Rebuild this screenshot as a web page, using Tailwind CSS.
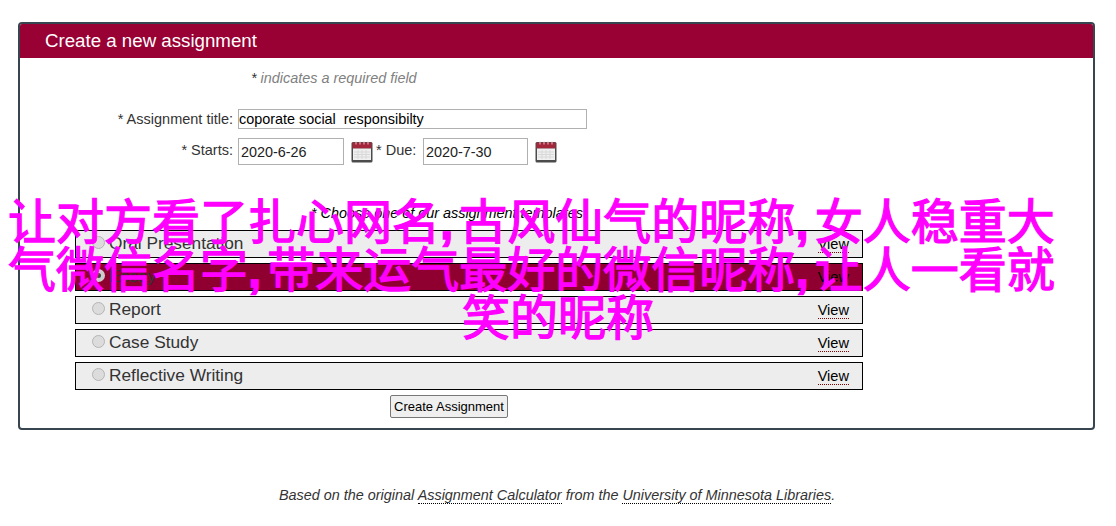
<!DOCTYPE html>
<html lang="en">
<head>
    <meta charset="UTF-8">
    <meta name="viewport" content="width=device-width, initial-scale=1.0">
    <title>Create a new assignment</title>
    <script src="https://cdn.jsdelivr.net/npm/@tailwindcss/browser@4"></script>
</head>
<body class="relative h-[526px] w-[1116px] overflow-hidden bg-white font-['Liberation_Sans',Arial,sans-serif] text-[#333]">
    <!-- Main panel -->
    <div class="mx-[18px] mt-[22px] h-[408px] w-[1077px] rounded-[4px] border-2 border-[#36454f]">
        <div class="flex h-[34px] items-center rounded-t-[2px] bg-[#990033] pl-[25px] text-[18.7px] text-white">Create a new assignment</div>

        <p class="mt-[12px] pl-[231px] text-[14.4px] leading-[16px] text-[#808080] italic"><span class="text-[#333]">*</span> indicates a required field</p>

        <!-- Title -->
        <div class="mt-[23px] flex h-[20px] items-center">
            <label class="mt-[1px] w-[213px] text-right text-[14.5px] text-[#333]">* Assignment title:</label>
            <input type="text" value="coporate social  responsibilty" class="ml-[5px] h-[20px] w-[349px] border border-[#b0b0b0] pt-[1px] font-['Liberation_Sans',sans-serif] text-[14.4px] text-black">
        </div>

        <!-- Dates -->
        <div class="mt-[9px] flex h-[27px] items-center">
            <label class="mb-[2px] w-[213px] text-right text-[14.5px] text-[#333]">* Starts:</label>
            <input type="text" value="2020-6-26" class="ml-[5px] h-[27px] w-[106px] border border-[#b0b0b0] pl-[2px] font-['Liberation_Sans',sans-serif] text-[14.4px] text-[#222]">
            <svg class="mt-[1px] ml-[7px] h-[22px] w-[22px]" viewBox="0 0 22 22">
                <rect x="0.5" y="1" width="21" height="20.5" rx="1.5" fill="#4c4c4c"/>
                <rect x="1.5" y="1.5" width="19" height="6" fill="#a3263a"/>
                <rect x="2" y="7.5" width="18" height="11.5" fill="#f0f0f0"/>
                <path d="M3 11h16M3 13.5h16M3 16h16M7 9v9M11 9v9M15 9v9" stroke="#d8d8d8" stroke-width="1"/>
                <path d="M5 0.5v3M9 0.5v3M13 0.5v3M17 0.5v3" stroke="#e4c8cc" stroke-width="1"/>
            </svg>
            <label class="mb-[2px] ml-[3px] w-[47px] text-[14.5px] text-[#333]">* Due:</label>
            <input type="text" value="2020-7-30" class="h-[27px] w-[105px] border border-[#b0b0b0] pl-[2px] font-['Liberation_Sans',sans-serif] text-[14.4px] text-[#222]">
            <svg class="mt-[1px] ml-[7px] h-[22px] w-[22px]" viewBox="0 0 22 22">
                <rect x="0.5" y="1" width="21" height="20.5" rx="1.5" fill="#4c4c4c"/>
                <rect x="1.5" y="1.5" width="19" height="6" fill="#a3263a"/>
                <rect x="2" y="7.5" width="18" height="11.5" fill="#f0f0f0"/>
                <path d="M3 11h16M3 13.5h16M3 16h16M7 9v9M11 9v9M15 9v9" stroke="#d8d8d8" stroke-width="1"/>
                <path d="M5 0.5v3M9 0.5v3M13 0.5v3M17 0.5v3" stroke="#e4c8cc" stroke-width="1"/>
            </svg>
        </div>

        <p class="mt-[40px] pl-[291px] text-[14.4px] leading-[16px] text-black italic">* Choose one of our assignment templates</p>

        <!-- Template rows -->
        <div class="mt-[9px] ml-[55px] flex w-[788px] flex-col gap-[5px]">
            <div class="flex h-[28px] items-center border border-black bg-[#ededed] pr-[13px] pl-[16px] text-[17.3px]">
                <span class="mb-[3px] h-[13px] w-[13px] rounded-full border border-[#b5b5b5] bg-[#dcdcdc]"></span>
                <span class="ml-[4px] flex-1">Oral Presentation</span>
                <a class="border-b border-dotted border-[#800000] text-[14.6px] leading-[16px] text-black">View</a>
            </div>
            <div class="flex h-[28px] items-center border border-black bg-[#8f0030] pr-[13px] pl-[16px] text-[17.3px]">
                <span class="mb-[3px] h-[13px] w-[13px] rounded-full border-[4px] border-[#ccc] bg-[#444]"></span>
                <span class="ml-[4px] flex-1">Essay</span>
                <a class="text-[14.6px] leading-[16px] text-black">View</a>
            </div>
            <div class="flex h-[28px] items-center border border-black bg-[#ededed] pr-[13px] pl-[16px] text-[17.3px]">
                <span class="mb-[3px] h-[13px] w-[13px] rounded-full border border-[#b5b5b5] bg-[#dcdcdc]"></span>
                <span class="ml-[4px] flex-1">Report</span>
                <a class="border-b border-dotted border-[#800000] text-[14.6px] leading-[16px] text-black">View</a>
            </div>
            <div class="flex h-[28px] items-center border border-black bg-[#ededed] pr-[13px] pl-[16px] text-[17.3px]">
                <span class="mb-[3px] h-[13px] w-[13px] rounded-full border border-[#b5b5b5] bg-[#dcdcdc]"></span>
                <span class="ml-[4px] flex-1">Case Study</span>
                <a class="border-b border-dotted border-[#800000] text-[14.6px] leading-[16px] text-black">View</a>
            </div>
            <div class="flex h-[28px] items-center border border-black bg-[#ededed] pr-[13px] pl-[16px] text-[17.3px]">
                <span class="mb-[3px] h-[13px] w-[13px] rounded-full border border-[#b5b5b5] bg-[#dcdcdc]"></span>
                <span class="ml-[4px] flex-1">Reflective Writing</span>
                <a class="border-b border-dotted border-[#800000] text-[14.6px] leading-[16px] text-black">View</a>
            </div>
        </div>

        <div class="mt-[4px] ml-[370px]">
            <button class="h-[23px] w-[118px] rounded-[2px] border border-[#777] bg-[#efefef] font-['Liberation_Sans',sans-serif] text-[13px] text-black">Create Assignment</button>
        </div>
    </div>

    <p class="mt-[56px] pl-[279px] text-[14.4px] leading-[19px] text-[#333] italic">Based on the original <a class="border-b border-dotted border-black">Assignment Calculator</a> from the <a class="border-b border-dotted border-black">University of Minnesota Libraries</a>.</p>

    <!-- Magenta caption over the page -->
    <div class="absolute top-[199px] left-0 w-[1116px] font-['Liberation_Sans','Noto_Sans_CJK_SC',sans-serif] text-[48px] leading-[48px] whitespace-nowrap text-[#ff00ff] [-webkit-text-stroke:1.3px_#ff00ff]">
        <div class="pl-[8px]">让对方看了扎心网名<span class="font-bold [letter-spacing:6px]">,</span>古风仙气的昵称<span class="font-bold [letter-spacing:6px]">,</span>女人稳重大</div>
        <div class="pl-[8px]">气微信名字<span class="font-bold [letter-spacing:6px]">,</span>带来运气最好的微信昵称<span class="font-bold [letter-spacing:6px]">,</span>让人一看就</div>
        <div class="text-center">笑的昵称</div>
    </div>
</body>
</html>
